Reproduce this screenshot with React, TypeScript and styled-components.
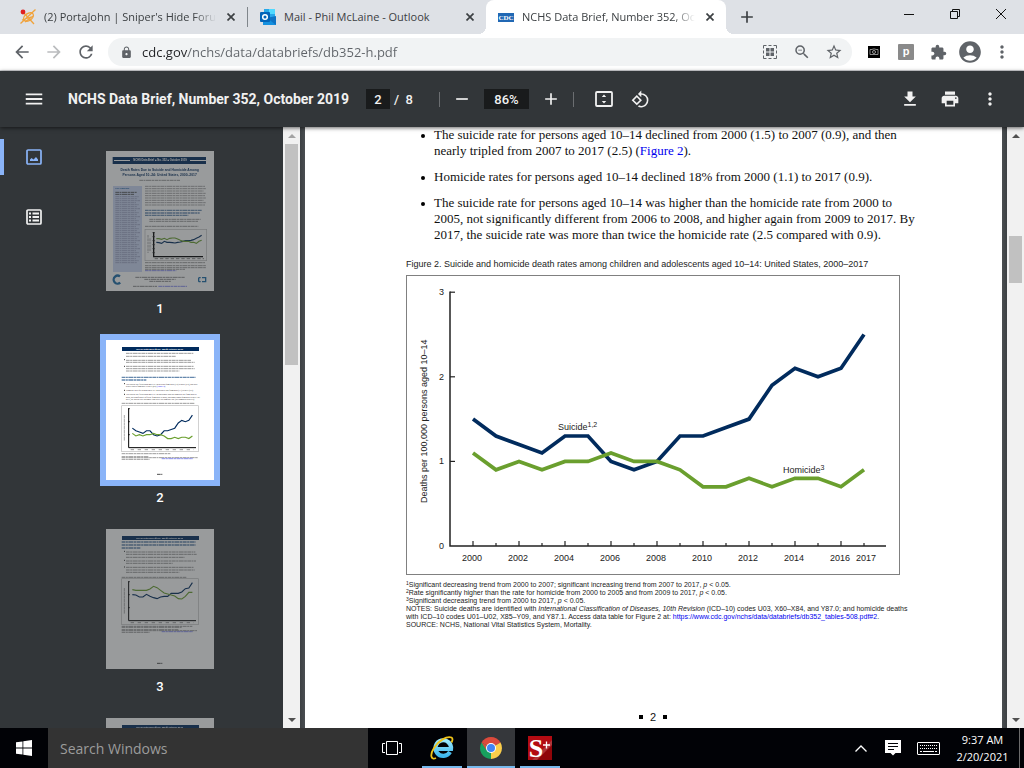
import React from 'react';
import styled, { createGlobalStyle } from 'styled-components';
import {
  MdArrowBack, MdArrowForward, MdRefresh, MdLock, MdStarBorder, MdZoomOut, MdExtension,
  MdAccountCircle, MdMoreVert, MdMenu, MdPrint, MdRotate90DegreesCcw, MdAdd, MdRemove,
  MdFileDownload,
} from 'react-icons/md';

const UI = '"Open Sans", "Noto Sans", sans-serif';
const ROBOTO = 'Roboto, sans-serif';
const SANS = '"Liberation Sans", Arial, sans-serif';
const SERIF = '"Liberation Serif", "Times New Roman", serif';

const NAVY = '#012b5d';
const GREEN = '#6a9f2e';

const GlobalStyle = createGlobalStyle`
  * { box-sizing: border-box; }
  html, body { margin: 0; padding: 0; }
  button { border: 0; padding: 0; background: none; font: inherit; color: inherit; }
  input { border: 0; padding: 0; outline: 0; }
  svg { display: block; }
`;

const Screen = styled.div`
  display: flex;
  flex-direction: column;
  height: 100vh;
  overflow: hidden;
  font-family: ${UI};
  font-size: 11px;
`;

const IconButton = styled.button<{ $w?: number; $color?: string }>`
  flex: none;
  display: flex;
  align-items: center;
  justify-content: center;
  width: ${p => p.$w ?? 32}px;
  height: 100%;
  color: ${p => p.$color ?? '#5f6368'};
`;

/* ---------- Tab strip ---------- */

const TabStrip = styled.header`
  flex: none;
  display: flex;
  height: 34px;
  background: #dee1e6;
`;

const TabItem = styled.div<{ $active?: boolean; $w: number; $inset?: boolean }>`
  position: relative;
  flex: 0 1 ${p => p.$w}px;
  min-width: 0;
  display: flex;
  align-items: center;
  gap: 8px;
  padding: 0 9px 0 ${p => (p.$inset ? 20 : 12)}px;
  color: #3c4043;
  background: ${p => (p.$active ? '#fff' : 'transparent')};
  border-radius: 8px 8px 0 0;
  &::before, &::after {
    content: '';
    display: ${p => (p.$active ? 'block' : 'none')};
    position: absolute;
    bottom: 0;
    width: 8px;
    height: 8px;
  }
  &::before { left: -8px; background: radial-gradient(circle at 0 0, transparent 8px, #fff 8px); }
  &::after { right: -8px; background: radial-gradient(circle at 100% 0, transparent 8px, #fff 8px); }
`;

const TabDivider = styled.span`
  flex: none;
  align-self: center;
  width: 1px;
  height: 20px;
  background: #80868b;
`;

const TabTitle = styled.button<{ $fade?: boolean }>`
  flex: 1;
  min-width: 0;
  height: 20px;
  overflow: hidden;
  white-space: nowrap;
  text-align: left;
  line-height: 20px;
  ${p => p.$fade && 'mask-image: linear-gradient(90deg, #000 calc(100% - 22px), transparent);'}
`;

const WindowButtons = styled.div`
  display: flex;
  height: 28px;
  margin-left: auto;
`;

/* ---------- Address bar ---------- */

const AddressBar = styled.div`
  flex: none;
  display: flex;
  height: 37px;
  padding: 0 6px;
  background: #fff;
  border-bottom: 1px solid #d5d7da;
`;

const Omnibox = styled.div`
  flex: 1;
  display: flex;
  align-items: center;
  height: 28px;
  margin: 4px 6px;
  padding: 0 2px 0 12px;
  border-radius: 14px;
  background: #f1f3f4;
  color: #5f6368;
`;

const UrlInput = styled.input`
  flex: 1;
  min-width: 0;
  height: 24px;
  margin-left: 9px;
  font-family: ${UI};
  font-size: 13px;
  color: transparent;
  background: linear-gradient(90deg, #202124 46px, #5f6368 46px);
  background-clip: text;
  -webkit-background-clip: text;
`;

/* ---------- PDF toolbar ---------- */

const PdfBar = styled.div`
  position: relative;
  z-index: 1;
  flex: none;
  display: grid;
  grid-template-columns: 1fr auto 1fr;
  height: 56px;
  padding: 0 14px;
  background: #323639;
  color: #f1f1f1;
  box-shadow: 0 1px 4px rgba(0, 0, 0, 0.6);
  font-family: ${ROBOTO};
  font-size: 13px;
  font-weight: 500;
`;

const BarGroup = styled.div<{ $end?: boolean }>`
  display: flex;
  align-items: center;
  min-width: 0;
  justify-content: ${p => (p.$end ? 'flex-end' : 'flex-start')};
`;

const DocTitle = styled.h1`
  margin: 0 0 0 14px;
  font-size: 14px;
  font-weight: 700;
  white-space: nowrap;
`;

const BarInput = styled.input<{ $w: number }>`
  width: ${p => p.$w}px;
  height: 20px;
  background: #191b1c;
  color: #f1f1f1;
  font-family: ${ROBOTO};
  font-size: 13px;
  font-weight: 500;
  text-align: center;
`;

const PageTotal = styled.span`
  width: 49px;
  padding-left: 4px;
  white-space: pre;
`;

const BarDivider = styled.span`
  width: 1px;
  height: 15px;
  background: #6b6e71;
`;

const ViewTools = styled.div`
  display: flex;
  height: 100%;
  margin-left: 12px;
`;

/* ---------- Viewer ---------- */

const Viewer = styled.div`
  flex: 1;
  min-height: 0;
  display: flex;
  background: #525659;
`;

const Sidebar = styled.aside`
  flex: none;
  display: flex;
  width: 300px;
  background: #323639;
`;

const Rail = styled.nav`
  display: flex;
  flex-direction: column;
  width: 68px;
  padding-top: 12px;
  gap: 24px;
`;

const RailButton = styled.button<{ $active?: boolean }>`
  display: flex;
  align-items: center;
  justify-content: center;
  height: 36px;
  color: ${p => (p.$active ? '#8ab4f8' : '#f1f1f1')};
  border-left: 4px solid ${p => (p.$active ? '#8ab4f8' : 'transparent')};
  border-right: 4px solid transparent;
  border-radius: 0 2px 2px 0;
`;

const ThumbList = styled.div`
  flex: 1;
  display: flex;
  flex-direction: column;
  align-items: center;
  overflow: hidden;
  padding: 18px 31px 0 0;
`;

const ThumbItem = styled.button`
  flex: none;
  display: flex;
  flex-direction: column;
  align-items: center;
  margin-bottom: 13px;
  color: #fff;
  font-family: ${ROBOTO};
  font-size: 13px;
  font-weight: 500;
  line-height: 24px;
`;

const ThumbFrame = styled.span<{ $active?: boolean }>`
  border: 6px solid ${p => (p.$active ? '#8ab4f8' : 'transparent')};
  & > svg {
    width: 108px;
    height: 140px;
    background: #fff;
    opacity: ${p => (p.$active ? 1 : 0.5)};
  }
`;

const ScrollColumn = styled.div`
  flex: none;
  display: flex;
  flex-direction: column;
  width: 17px;
  background: #f1f1f1;
`;

const ScrollArrow = styled.button`
  display: flex;
  align-items: center;
  justify-content: center;
  height: 17px;
`;

const ScrollPart = styled.div<{ $grow: number; $thumb?: boolean }>`
  flex: ${p => p.$grow} 1 0;
  margin: 0 2px;
  background: ${p => (p.$thumb ? '#c1c1c1' : 'transparent')};
`;

const PageArea = styled.main`
  flex: 1;
  min-width: 0;
  display: flex;
  padding: 0 5px;
  background: linear-gradient(90deg, #3c4043, #4a4e51 5px, #4a4e51 calc(100% - 5px), #3c4043);
`;

const Page = styled.article`
  flex: 1;
  min-width: 0;
  display: flex;
  flex-direction: column;
  align-items: center;
  padding-right: 1px;
  background: #fff;
  color: #111;
`;

const PageContent = styled.div`
  width: 494px;
  max-width: 100%;
`;

const Bullets = styled.ul`
  display: flex;
  flex-direction: column;
  gap: 10px;
  margin: 0;
  padding: 0;
  list-style: none;
  font-family: ${SERIF};
  font-size: 13px;
  line-height: 16px;
`;

const Bullet = styled.li`
  display: flex;
  padding-left: 15px;
  white-space: nowrap;
  &::before {
    content: '';
    flex: none;
    width: 4px;
    height: 4px;
    margin: 7px 9px 0 0;
    border-radius: 50%;
    background: #000;
  }
`;

const DocLink = styled.a`
  color: #0000ee;
  text-decoration: none;
`;

const Figure = styled.figure`
  display: flex;
  flex-direction: column;
  margin: 14px 0 0;
`;

const Caption = styled.figcaption`
  margin-bottom: 4px;
  font-family: ${SANS};
  font-size: 9px;
  line-height: 14px;
  white-space: nowrap;
  color: #222;
`;

const ChartBox = styled.div`
  border: 1px solid #808080;
  & > svg { width: 100%; height: auto; }
`;

const Notes = styled.div`
  margin-top: 6px;
  font-family: ${SANS};
  font-size: 7px;
  line-height: 8px;
  color: #222;
  white-space: nowrap;
  & sup { font-size: 5px; line-height: 0; vertical-align: 2px; }
`;

const PageNumber = styled.footer`
  display: flex;
  align-items: center;
  gap: 7px;
  margin-top: auto;
  padding-bottom: 4px;
  font-family: ${SANS};
  font-size: 11px;
  line-height: 14px;
  &::before, &::after { content: ''; width: 4px; height: 4px; background: #000; }
`;

/* ---------- Taskbar ---------- */

const Taskbar = styled.footer`
  flex: none;
  display: flex;
  height: 40px;
  background: #010206;
  color: #fff;
`;

const SearchBox = styled.input`
  flex: none;
  width: 320px;
  padding-left: 12px;
  background: #333;
  color: #9c9c9c;
  font-family: ${UI};
  font-size: 14px;
  &::placeholder { color: #9c9c9c; opacity: 1; }
`;

const TaskButton = styled.button<{ $w: number; $running?: boolean; $active?: boolean }>`
  flex: none;
  display: flex;
  align-items: center;
  justify-content: center;
  width: ${p => p.$w}px;
  border-top: 2px solid transparent;
  border-bottom: 2px solid ${p => (p.$running ? '#76b9ed' : 'transparent')};
  background: ${p => (p.$active ? '#35373b' : 'transparent')};
`;

const RunningApps = styled.div`
  display: flex;
  gap: 5px;
  margin-left: 6px;
`;

const Tray = styled.div`
  display: flex;
  margin-left: auto;
  padding-right: 4px;
`;

const Clock = styled.time`
  display: flex;
  flex-direction: column;
  justify-content: center;
  align-items: center;
  width: 74px;
  border-right: 1px solid #6b6b6b;
  font-size: 11px;
  line-height: 17px;
`;

/* ---------- Drawings ---------- */

function SniperIcon() {
  return (
    <svg width="16" height="16" viewBox="0 0 16 16" fill="none" stroke="#f0a33c" strokeWidth="1.3">
      <ellipse cx="8.500" cy="8" rx="5.500" ry="3.500" transform="rotate(-35 8.500 8)" />
      <path d="M.5 14.500L15.500 .5M3 3l11 12M2 11l9-3M5 13l8-6" />
      <circle cx="3" cy="3" r="2.400" fill="#e02020" stroke="none" />
    </svg>
  );
}

function OutlookIcon() {
  return (
    <svg width="16" height="16" viewBox="0 0 16 16">
      <path d="M4 0h11v9H4z" fill="#28a8ea" />
      <path d="M9 0h6v5H9z" fill="#50d9ff" />
      <path d="M4 4h5v5H4z" fill="#0a5bb0" />
      <path d="M3 8h13v8H3z" fill="#1490df" />
      <path d="M16 7v9L7 9z" fill="#0f73c4" />
      <rect y="3" width="10" height="10" rx="1" fill="#0364b8" />
      <circle cx="5" cy="8" r="2.300" fill="none" stroke="#fff" strokeWidth="1.500" />
    </svg>
  );
}

function CdcIcon() {
  return (
    <svg width="16" height="16" viewBox="0 0 16 16">
      <rect y="4" width="16" height="9" fill="#2168b4" />
      <text x="8" y="11" textAnchor="middle" fontFamily="Liberation Serif, serif" fontWeight="700" fontSize="7" fill="#fff">CDC</text>
    </svg>
  );
}

function CloseGlyph() {
  return <svg width="8" height="8" viewBox="0 0 8 8" stroke="currentColor" strokeWidth="1.700"><path d="M.5 .5l7 7M7.500 .5l-7 7" /></svg>;
}

function WindowGlyph({ kind }: { kind: 'min' | 'max' | 'close' }) {
  const d = { min: 'M0 5.5h10', max: 'M.5 2.5h7v7h-7zM2.5 2.5v-2h7v7h-2', close: 'M0 0l10 10M10 0L0 10' }[kind];
  return <svg width="10" height="10" viewBox="0 0 10 10" fill="none" stroke="#111"><path d={d} /></svg>;
}

function QrIcon() {
  return (
    <svg width="14" height="14" viewBox="0 0 14 14" fill="none" stroke="#5f6368">
      <path d="M.5 3.500V.5H3.500M10.500 .5h3v3M13.500 10.500v3h-3M3.500 13.500h-3v-3M5.500 .5h3M5.500 13.500h3M.5 5.500v3M13.500 5.500v3" />
      <path d="M3 3h3.500v3.500H3zM7.500 3H11v3.500H7.500zM3 7.500h3.500V11H3zM7.500 7.500H11V11H7.500z" fill="#5f6368" stroke="none" />
    </svg>
  );
}

function CameraExtension() {
  return (
    <svg width="12" height="12" viewBox="0 0 12 12">
      <rect width="12" height="12" fill="#000" />
      <path d="M2 3.500h2l1-.5h2l1 .5h2v5H2z" fill="none" stroke="#aaa" strokeWidth=".8" />
      <circle cx="6" cy="6" r="1.500" fill="none" stroke="#bbb" strokeWidth=".8" />
    </svg>
  );
}

function PExtension() {
  return (
    <svg width="16" height="16" viewBox="0 0 16 16">
      <rect width="16" height="16" rx="1" fill="#8a8a8a" />
      <text x="8" y="11" textAnchor="middle" fontFamily="Liberation Sans, sans-serif" fontWeight="700" fontSize="11" fill="#fff">p</text>
    </svg>
  );
}

function FitPageIcon() {
  return (
    <svg width="18" height="16" viewBox="0 0 18 16">
      <rect x="1" y="1" width="16" height="14" rx="1" fill="none" stroke="#f1f1f1" strokeWidth="1.800" />
      <path d="M9 3.500l2.200 2.500H6.800zM9 12.500l2.200-2.500H6.800z" fill="#f1f1f1" />
    </svg>
  );
}

function ThumbnailsIcon() {
  return (
    <svg width="16" height="16" viewBox="0 0 16 16">
      <rect x="1" y="1" width="14" height="14" rx="1" fill="none" stroke="currentColor" strokeWidth="1.700" />
      <path d="M4 12V10.500L5.500 9 7.500 10.500 10 8l2 2.500V12z" fill="currentColor" />
    </svg>
  );
}

function OutlineIcon() {
  return (
    <svg width="16" height="16" viewBox="0 0 16 16" fill="none" stroke="currentColor">
      <rect x="1" y="1" width="14" height="14" rx="1" strokeWidth="1.700" />
      <path d="M3 4.500h2M3 8h2M3 11.500h2M6.500 4.500H13M6.500 8H13M6.500 11.500H13" strokeWidth="2" />
    </svg>
  );
}

function Triangle({ down, pale }: { down?: boolean; pale?: boolean }) {
  return (
    <svg width="8" height="4" viewBox="0 0 8 4">
      <path d={down ? 'M0 0h8L4 4z' : 'M0 4h8L4 0z'} fill={pale ? '#a3a3a3' : '#505050'} />
    </svg>
  );
}

function Scrollbar({ before, size, after, pale }: { before: number; size: number; after: number; pale?: boolean }) {
  return (
    <ScrollColumn>
      <ScrollArrow aria-label="Scroll up"><Triangle pale={pale} /></ScrollArrow>
      <ScrollPart $grow={before} />
      <ScrollPart $grow={size} $thumb />
      <ScrollPart $grow={after} />
      <ScrollArrow aria-label="Scroll down"><Triangle down /></ScrollArrow>
    </ScrollColumn>
  );
}

/* ---------- Chart ---------- */

const suicide = [1.5, 1.3, 1.2, 1.1, 1.3, 1.3, 1.0, 0.9, 1.0, 1.3, 1.3, 1.4, 1.5, 1.9, 2.1, 2.0, 2.1, 2.5];
const homicide = [1.1, 0.9, 1.0, 0.9, 1.0, 1.0, 1.1, 1.0, 1.0, 0.9, 0.7, 0.7, 0.8, 0.7, 0.8, 0.8, 0.7, 0.9];
const xLabels = [2000, 2002, 2004, 2006, 2008, 2010, 2012, 2014, 2016];

const path = (xs: number, step: number, ys: number[]) => ys.map((y, i) => `${xs + i * step},${y}`).join(' ');
const scaleY = (base: number, unit: number, v: number[]) => v.map(n => base - n * unit);

function RatesChart() {
  const x0 = 66;
  const step = 23;
  return (
    <svg viewBox="0 0 492 298" role="img" aria-label="Suicide and homicide death rates, 2000 to 2017" fontFamily="Liberation Sans, Arial, sans-serif" fontSize="9" fill="#222">
      <path d="M43 15.500V270H479" fill="none" stroke="#222" strokeWidth="1.500" />
      {[0, 1, 2, 3].map(v => (
        <g key={v}>
          {v > 0 && <path d={`M43 ${270 - v * 84.6}h5`} stroke="#222" strokeWidth="1.200" />}
          <text x="37" y={273 - v * 84.6} textAnchor="end">{v}</text>
        </g>
      ))}
      {suicide.map((_, i) => (
        <path key={i} d={`M${x0 + i * step} 270v${i % 2 ? -3 : -5}`} stroke="#222" strokeWidth="1.200" />
      ))}
      {xLabels.map((y, i) => <text key={y} x={x0 - 1 + i * 46} y="285" textAnchor="middle">{y}</text>)}
      <text x="459" y="285" textAnchor="middle">2017</text>
      <text transform="translate(20 227) rotate(-90)">Deaths per 100,000 persons aged 10–14</text>
      <g fill="none" strokeWidth="3.700">
        <polyline points={path(x0, step, scaleY(270, 84.6, suicide))} stroke={NAVY} />
        <polyline points={path(x0, step, scaleY(270, 84.6, homicide))} stroke={GREEN} />
      </g>
      <text x="151" y="154">Suicide<tspan fontSize="7" dy="-3">1,2</tspan></text>
      <text x="376" y="197">Homicide<tspan fontSize="7" dy="-3">3</tspan></text>
    </svg>
  );
}

/* ---------- Thumbnails (drawn at three units per pixel) ---------- */

type Row = [x: number, y: number, w: number];

function GreekedRows({ rows, color = '#8c8c8c', h = 2.6 }: { rows: Row[]; color?: string; h?: number }) {
  return (
    <g stroke={color} strokeWidth={h} strokeDasharray="11 1.500 6 1.500 15 1.500 8 1.500">
      {rows.map(([x, y, w]) => <path key={`${x}-${y}`} d={`M${x} ${y}h${w}`} />)}
    </g>
  );
}

function MiniBanner() {
  return (
    <g>
      <rect x="48" y="21" width="231" height="12" fill={NAVY} />
      <text x="161" y="30" textAnchor="middle" fontFamily="Liberation Sans, sans-serif" fontWeight="700" fontSize="7" fill="#fff">NCHS Data Brief ■ No. 352 ■ October 2019</text>
    </g>
  );
}

function MiniChart({ top, blue, green }: { top: number; blue: number[]; green: number[] }) {
  return (
    <g fill="none">
      <rect x="47" y={top} width="230" height="138" stroke="#bbb" strokeWidth="2" />
      <path d={`M68 ${top + 8}v118h202`} stroke="#000" strokeWidth="3" />
      <path d={`M66 ${top + 9}h6M66 ${top + 48}h6M66 ${top + 87}h6`} stroke="#000" strokeWidth="2" />
      <path d={`M74 ${top + 132}h190`} stroke="#999" strokeWidth="3" strokeDasharray="10 11" />
      <path d={`M55 ${top + 28}v78`} stroke="#aaa" strokeWidth="3" strokeDasharray="10 1" />
      <polyline points={path(79, 10.6, blue)} stroke={NAVY} strokeWidth="3.400" />
      <polyline points={path(79, 10.6, green)} stroke={GREEN} strokeWidth="3.400" />
    </g>
  );
}

function ThumbOne() {
  const blue = [349, 350, 352, 346, 349, 349, 350, 351, 349, 348, 346, 344, 344, 343, 341, 337, 333, 328].map(y => y - 75);
  const green = [338, 338, 340, 337, 341, 337, 336, 336, 339, 343, 346, 346, 346, 349, 349, 352, 346, 343].map(y => y - 75);
  const side: Row[] = Array.from({ length: 34 }, (_, i) => [28, 137 + i * 6, [70, 66, 74, 62][i % 4]] as Row);
  const intro: Row[] = Array.from({ length: 9 }, (_, i) => [117, 106 + i * 7, [180, 184, 176, 182][i % 4]] as Row);
  return (
    <svg viewBox="0 0 324 420" fontFamily="Liberation Sans, sans-serif" fontWeight="700">
      <rect x="20" y="18" width="280" height="21" fill={NAVY} />
      <path d="M24 28.500h48M252 28.500h48" stroke="#fff" strokeWidth="3" />
      <text x="162" y="31" textAnchor="middle" fontSize="8" fill="#fff">NCHS Data Brief ■ No. 352 ■ October 2019</text>
      <g fill={NAVY}>
        <text x="161" y="60" textAnchor="middle" fontSize="10">Death Rates Due to Suicide and Homicide Among</text>
        <text x="161" y="75" textAnchor="middle" fontSize="10">Persons Aged 10–24: United States, 2000–2017</text>
      </g>
      <GreekedRows rows={[[100, 88, 122]]} />
      <rect x="21" y="105" width="87" height="258" fill="#ccd8f4" />
      <text x="28" y="115" fontSize="7" fill="#1d5f9c">Key findings</text>
      <GreekedRows rows={[[28, 124, 64], [28, 130, 56]]} color="#444" />
      <GreekedRows rows={side} color="#9aa4c0" />
      <GreekedRows rows={intro} color="#999" />
      <GreekedRows rows={[[117, 178, 170], [117, 186, 164], [117, 193, 130]]} color="#6f90b4" h={4} />
      <GreekedRows rows={[[130, 205, 154], [130, 211, 146], [117, 226, 160]]} />
      <g fill="none">
        <rect x="117" y="235" width="185" height="94" stroke="#bbb" strokeWidth="2" />
        <path d="M143 243v74h148" stroke="#000" strokeWidth="4" />
        <path d="M139 245h8M139 257h8M139 269h8M139 281h8M139 293h8M139 305h8" stroke="#222" strokeWidth="2" />
        <path d="M126 252v54M132 262v38" stroke="#aaa" strokeWidth="3" strokeDasharray="8 2" />
        <path d="M146 323h148" stroke="#888" strokeWidth="3" strokeDasharray="10 6" />
        <polyline points={path(151, 8, blue)} stroke={NAVY} strokeWidth="3.400" />
        <polyline points={path(151, 8, green)} stroke={GREEN} strokeWidth="3.400" />
      </g>
      <GreekedRows rows={[[117, 335, 180], [117, 344, 184], [117, 350, 184], [117, 355, 120]]} />
      <GreekedRows rows={[[117, 359, 94]]} color="#7a80ee" />
      <circle cx="35" cy="386" r="12" fill="none" stroke="#1c6ca8" strokeWidth="7" strokeDasharray="52 24" transform="rotate(50 35 386)" />
      <GreekedRows rows={[[88, 379, 148], [115, 385, 94], [130, 391, 66], [81, 406, 72]]} color="#777" />
      <GreekedRows rows={[[157, 406, 86]]} color="#7a80ee" />
      <path d="M278 380h6M288 380h11v12h-11M278 392h6M278 380v12" fill="none" stroke="#1c6ca8" strokeWidth="4" />
    </svg>
  );
}

function ThumbTwo() {
  return (
    <svg viewBox="0 0 324 420">
      <MiniBanner />
      <GreekedRows rows={[[60, 40, 202], [60, 49, 150], [60, 61, 196], [60, 67, 206], [60, 79, 204], [60, 86, 206], [60, 93, 160]]} />
      <GreekedRows rows={[[47, 112, 222], [47, 120, 74]]} color="#6688ad" h={4} />
      <g fontFamily="Liberation Serif, serif" fontSize="6" fill="#111">
        <text x="60" y="135">The suicide rate for persons aged 10–14 declined from 2000 (1.5) to 2007 (0.9), and then</text>
        <text x="60" y="142">nearly tripled from 2007 to 2017 (2.5) <tspan fill="#0000ee">(Figure 2)</tspan>.</text>
        <text x="60" y="153">Homicide rates for persons aged 10–14 declined 18% from 2000 (1.1) to 2017 (0.9).</text>
        <text x="60" y="166">The suicide rate for persons aged 10–14 was higher than the homicide rate from 2000 to</text>
        <text x="60" y="173">2005, not significantly different from 2006 to 2008, and higher again from 2009 to 2017. By</text>
        <text x="60" y="180">2017, the suicide rate was more than twice the homicide rate (2.5 compared with 0.9).</text>
      </g>
      <path d="M54 59h3M54 79h3M54 131h3M54 151h3M54 163h3" stroke="#333" strokeWidth="3" />
      <GreekedRows rows={[[47, 190, 218]]} />
      <MiniChart top={197} blue={scaleY(323, 39, suicide)} green={scaleY(323, 39, homicide)} />
      <GreekedRows rows={[[47, 341, 146], [47, 350, 80], [47, 353, 228], [47, 358, 84]]} />
      <GreekedRows rows={[[167, 356, 94]]} color="#7a80ee" />
      <GreekedRows rows={[[153, 403, 16]]} color="#333" />
    </svg>
  );
}

function ThumbThree() {
  const blue = [206, 207, 213, 213, 205, 211, 215, 218, 213, 211, 211, 202, 202, 202, 198, 188, 186, 170].map(y => y - 9);
  const green = [191, 193, 193, 193, 193, 189, 181, 185, 193, 201, 204, 207, 210, 218, 219, 211, 199, 199].map(y => y - 9);
  return (
    <svg viewBox="0 0 324 420">
      <MiniBanner />
      <GreekedRows rows={[[47, 39, 222], [47, 48, 222], [47, 57, 56]]} color="#6688ad" h={4} />
      <GreekedRows rows={[[60, 69, 208], [60, 76, 212], [60, 85, 176], [60, 96, 210], [60, 103, 140], [60, 115, 204], [60, 123, 206], [60, 130, 160]]} />
      <path d="M54 67h3M54 94h3M54 114h3" stroke="#333" strokeWidth="3" />
      <GreekedRows rows={[[47, 145, 194]]} />
      <MiniChart top={149} blue={blue} green={green} />
      <GreekedRows rows={[[47, 292, 212], [47, 295, 180], [47, 302, 170], [47, 305, 226], [47, 310, 84]]} />
      <GreekedRows rows={[[167, 308, 94]]} color="#7a80ee" />
      <GreekedRows rows={[[153, 403, 16]]} color="#333" />
    </svg>
  );
}

function ThumbFour() {
  return <svg viewBox="0 0 324 420"><MiniBanner /></svg>;
}

/* ---------- Taskbar drawings ---------- */

function WindowsLogo() {
  return (
    <svg width="16" height="16" viewBox="0 0 16 16" fill="#fff">
      <path d="M0 2.300L6.500 1.400v6.200H0zM7.300 1.300L16 0v7.600H7.300zM0 8.400h6.500v6.200L0 13.700zM7.300 8.400H16V16l-8.700-1.300z" />
    </svg>
  );
}

function TaskViewIcon() {
  return (
    <svg width="20" height="14" viewBox="0 0 20 14" fill="none" stroke="#fff">
      <path d="M4.500 .5h11v13h-11zM3 2.500H.5v9H3M17 2.500h2.500v9H17" />
    </svg>
  );
}

function ExplorerIcon() {
  return (
    <svg width="24" height="24" viewBox="0 0 24 24">
      <defs>
        <linearGradient id="ie" x1="0" y1="0" x2="0" y2="1">
          <stop offset="0" stopColor="#9be8fd" />
          <stop offset="1" stopColor="#3fb8ee" />
        </linearGradient>
      </defs>
      <path d="M20 16A7.800 7.800 0 1 1 21 13H7.500" fill="none" stroke="url(#ie)" strokeWidth="4.200" />
      <path d="M6 22C1 24.500-.5 19 4 12 8 5 17-.5 21.500 1.500c1.500.8 1 3 0 5" fill="none" stroke="#f0c419" strokeWidth="1.800" />
    </svg>
  );
}

function ChromeIcon() {
  return (
    <svg width="24" height="24" viewBox="0 0 24 24">
      <path d="M12 12L2.500 6.500A11 11 0 0 1 21.500 6.500z" fill="#db4a3c" />
      <path d="M12 12L21.500 6.500A11 11 0 0 1 12 23z" fill="#fbce4b" />
      <path d="M12 12V23A11 11 0 0 1 2.500 6.500z" fill="#17a05e" />
      <path d="M12 7h9.800l-.3-.5H12zM7.700 14.500L2.500 6.500 7 9z" fill="#db4a3c" />
      <path d="M16.300 14.500L12 23V16z" fill="#fbce4b" />
      <circle cx="12" cy="12" r="5" fill="#fff" />
      <circle cx="12" cy="12" r="4" fill="#4285f4" />
    </svg>
  );
}

function SPlusIcon() {
  return (
    <svg width="24" height="24" viewBox="0 0 24 24">
      <rect width="24" height="24" fill="#b30b12" />
      <path d="M24 4v20H4z" fill="#900509" />
      <path d="M24 9L9 24H4L24 4z" fill="#c4555a" opacity=".6" />
      <text x="8" y="21" textAnchor="middle" fontFamily="Liberation Serif, serif" fontWeight="700" fontSize="26" fill="#fff">S</text>
      <path d="M15 9h7M18.500 5.500v7" stroke="#fff" strokeWidth="1.300" />
    </svg>
  );
}

function ChevronIcon() {
  return <svg width="12" height="7" viewBox="0 0 12 7" fill="none" stroke="#fff" strokeWidth="1.300"><path d="M.5 6.500L6 1l5.500 5.500" /></svg>;
}

function NotificationIcon() {
  return (
    <svg width="16" height="16" viewBox="0 0 16 16">
      <path d="M0 0h16v13h-5.500L8 15.500 5.500 13H0z" fill="#fff" />
      <path d="M3 3.500h10M3 6.500h10M3 9.500h6" stroke="#010206" />
    </svg>
  );
}

function KeyboardIcon() {
  return (
    <svg width="23" height="13" viewBox="0 0 23 13" fill="none" stroke="#fff">
      <rect x=".5" y=".5" width="22" height="12" rx=".5" />
      <path d="M3 3.500h17M3 6.500h17" strokeDasharray="1 1" />
      <path d="M3 9.500h2M6 9.500h11M18 9.500h2" />
    </svg>
  );
}

/* ---------- App ---------- */

const thumbs = [ThumbOne, ThumbTwo, ThumbThree, ThumbFour];

function BrowserTab(props: { icon: React.ReactNode; title: string; w: number; active?: boolean; fade?: boolean; inset?: boolean }) {
  return (
    <TabItem $w={props.w} $active={props.active} $inset={props.inset}>
      {props.icon}
      <TabTitle $fade={props.fade}>{props.title}</TabTitle>
      <IconButton $w={14} $color="#3c4043" aria-label={`Close ${props.title}`}><CloseGlyph /></IconButton>
    </TabItem>
  );
}

export default function App() {
  return (
    <Screen>
      <GlobalStyle />
      <TabStrip>
        <BrowserTab w={247} inset fade icon={<SniperIcon />} title="(2) PortaJohn | Sniper's Hide Forum" />
        <TabDivider />
        <BrowserTab w={238} icon={<OutlookIcon />} title="Mail - Phil McLaine - Outlook" />
        <BrowserTab w={240} active fade icon={<CdcIcon />} title="NCHS Data Brief, Number 352, October 2019" />
        <IconButton $w={42} $color="#3c4043" aria-label="New tab"><MdAdd size={20} /></IconButton>
        <WindowButtons>
          <IconButton $w={46} aria-label="Minimize"><WindowGlyph kind="min" /></IconButton>
          <IconButton $w={46} aria-label="Restore"><WindowGlyph kind="max" /></IconButton>
          <IconButton $w={46} aria-label="Close window"><WindowGlyph kind="close" /></IconButton>
        </WindowButtons>
      </TabStrip>

      <AddressBar>
        <IconButton aria-label="Back"><MdArrowBack size={20} /></IconButton>
        <IconButton $color="#babcbe" aria-label="Forward"><MdArrowForward size={20} /></IconButton>
        <IconButton aria-label="Reload"><MdRefresh size={20} /></IconButton>
        <Omnibox>
          <MdLock size={13} />
          <UrlInput aria-label="Address" defaultValue="cdc.gov/nchs/data/databriefs/db352-h.pdf" />
          <IconButton aria-label="QR code"><QrIcon /></IconButton>
          <IconButton aria-label="Zoom"><MdZoomOut size={18} /></IconButton>
          <IconButton aria-label="Bookmark"><MdStarBorder size={18} /></IconButton>
        </Omnibox>
        <IconButton aria-label="Screenshot extension"><CameraExtension /></IconButton>
        <IconButton aria-label="P extension"><PExtension /></IconButton>
        <IconButton aria-label="Extensions"><MdExtension size={17} /></IconButton>
        <IconButton aria-label="Profile"><MdAccountCircle size={26} /></IconButton>
        <IconButton aria-label="Chrome menu"><MdMoreVert size={20} /></IconButton>
      </AddressBar>

      <PdfBar>
        <BarGroup>
          <IconButton $w={40} $color="#f1f1f1" aria-label="Menu"><MdMenu size={22} /></IconButton>
          <DocTitle>NCHS Data Brief, Number 352, October 2019</DocTitle>
        </BarGroup>
        <BarGroup>
          <BarInput $w={24} aria-label="Page number" defaultValue="2" />
          <PageTotal>/  8</PageTotal>
          <BarDivider />
          <IconButton $w={44} $color="#f1f1f1" aria-label="Zoom out"><MdRemove size={20} /></IconButton>
          <BarInput $w={45} aria-label="Zoom level" defaultValue="86%" />
          <IconButton $w={44} $color="#f1f1f1" aria-label="Zoom in"><MdAdd size={20} /></IconButton>
          <BarDivider />
          <ViewTools>
            <IconButton $w={36} aria-label="Fit to page"><FitPageIcon /></IconButton>
            <IconButton $w={36} $color="#f1f1f1" aria-label="Rotate"><MdRotate90DegreesCcw size={19} /></IconButton>
          </ViewTools>
        </BarGroup>
        <BarGroup $end>
          <IconButton $w={40} $color="#f1f1f1" aria-label="Download"><MdFileDownload size={20} /></IconButton>
          <IconButton $w={40} $color="#f1f1f1" aria-label="Print"><MdPrint size={20} /></IconButton>
          <IconButton $w={40} $color="#f1f1f1" aria-label="More actions"><MdMoreVert size={20} /></IconButton>
        </BarGroup>
      </PdfBar>

      <Viewer>
        <Sidebar>
          <Rail>
            <RailButton $active aria-label="Thumbnails"><ThumbnailsIcon /></RailButton>
            <RailButton aria-label="Document outline"><OutlineIcon /></RailButton>
          </Rail>
          <ThumbList>
            {thumbs.map((Thumb, i) => (
              <ThumbItem key={i}>
                <ThumbFrame $active={i === 1}><Thumb /></ThumbFrame>
                {i + 1}
              </ThumbItem>
            ))}
          </ThumbList>
          <Scrollbar before={0} size={221} after={346} pale />
        </Sidebar>

        <PageArea>
          <Page>
            <PageContent>
              <Bullets>
                <Bullet>
                  <span>
                    The suicide rate for persons aged 10–14 declined from 2000 (1.5) to 2007 (0.9), and then<br />
                    nearly tripled from 2007 to 2017 (2.5) (<DocLink href="#figure-2">Figure 2</DocLink>).
                  </span>
                </Bullet>
                <Bullet><span>Homicide rates for persons aged 10–14 declined 18% from 2000 (1.1) to 2017 (0.9).</span></Bullet>
                <Bullet>
                  <span>
                    The suicide rate for persons aged 10–14 was higher than the homicide rate from 2000 to<br />
                    2005, not significantly different from 2006 to 2008, and higher again from 2009 to 2017. By<br />
                    2017, the suicide rate was more than twice the homicide rate (2.5 compared with 0.9).
                  </span>
                </Bullet>
              </Bullets>
              <Figure id="figure-2">
                <Caption>Figure 2. Suicide and homicide death rates among children and adolescents aged 10–14: United States, 2000–2017</Caption>
                <ChartBox><RatesChart /></ChartBox>
              </Figure>
              <Notes>
                <div><sup>1</sup>Significant decreasing trend from 2000 to 2007; significant increasing trend from 2007 to 2017, <i>p</i> &lt; 0.05.</div>
                <div><sup>2</sup>Rate significantly higher than the rate for homicide from 2000 to 2005 and from 2009 to 2017, <i>p</i> &lt; 0.05.</div>
                <div><sup>3</sup>Significant decreasing trend from 2000 to 2017, <i>p</i> &lt; 0.05.</div>
                <div>NOTES: Suicide deaths are identified with <i>International Classification of Diseases, 10th Revision</i> (ICD–10) codes U03, X60–X84, and Y87.0; and homicide deaths</div>
                <div>with ICD–10 codes U01–U02, X85–Y09, and Y87.1. Access data table for Figure 2 at: <DocLink href="https://www.cdc.gov/nchs/data/databriefs/db352_tables-508.pdf#2">https://www.cdc.gov/nchs/data/databriefs/db352_tables-508.pdf#2</DocLink>.</div>
                <div>SOURCE: NCHS, National Vital Statistics System, Mortality.</div>
              </Notes>
            </PageContent>
            <PageNumber>2</PageNumber>
          </Page>
        </PageArea>
        <Scrollbar before={92} size={47} after={428} />
      </Viewer>

      <Taskbar>
        <TaskButton $w={48} aria-label="Start"><WindowsLogo /></TaskButton>
        <SearchBox aria-label="Search Windows" placeholder="Search Windows" />
        <TaskButton $w={48} aria-label="Task view"><TaskViewIcon /></TaskButton>
        <RunningApps>
          <TaskButton $w={40} $running aria-label="Internet Explorer"><ExplorerIcon /></TaskButton>
          <TaskButton $w={48} $running $active aria-label="Chrome"><ChromeIcon /></TaskButton>
          <TaskButton $w={40} $running aria-label="Screenshot Plus"><SPlusIcon /></TaskButton>
        </RunningApps>
        <Tray>
          <TaskButton $w={30} aria-label="Show hidden icons"><ChevronIcon /></TaskButton>
          <TaskButton $w={34} aria-label="Notifications"><NotificationIcon /></TaskButton>
          <TaskButton $w={36} aria-label="Touch keyboard"><KeyboardIcon /></TaskButton>
          <Clock><span>9:37 AM</span><span>2/20/2021</span></Clock>
        </Tray>
      </Taskbar>
    </Screen>
  );
}
